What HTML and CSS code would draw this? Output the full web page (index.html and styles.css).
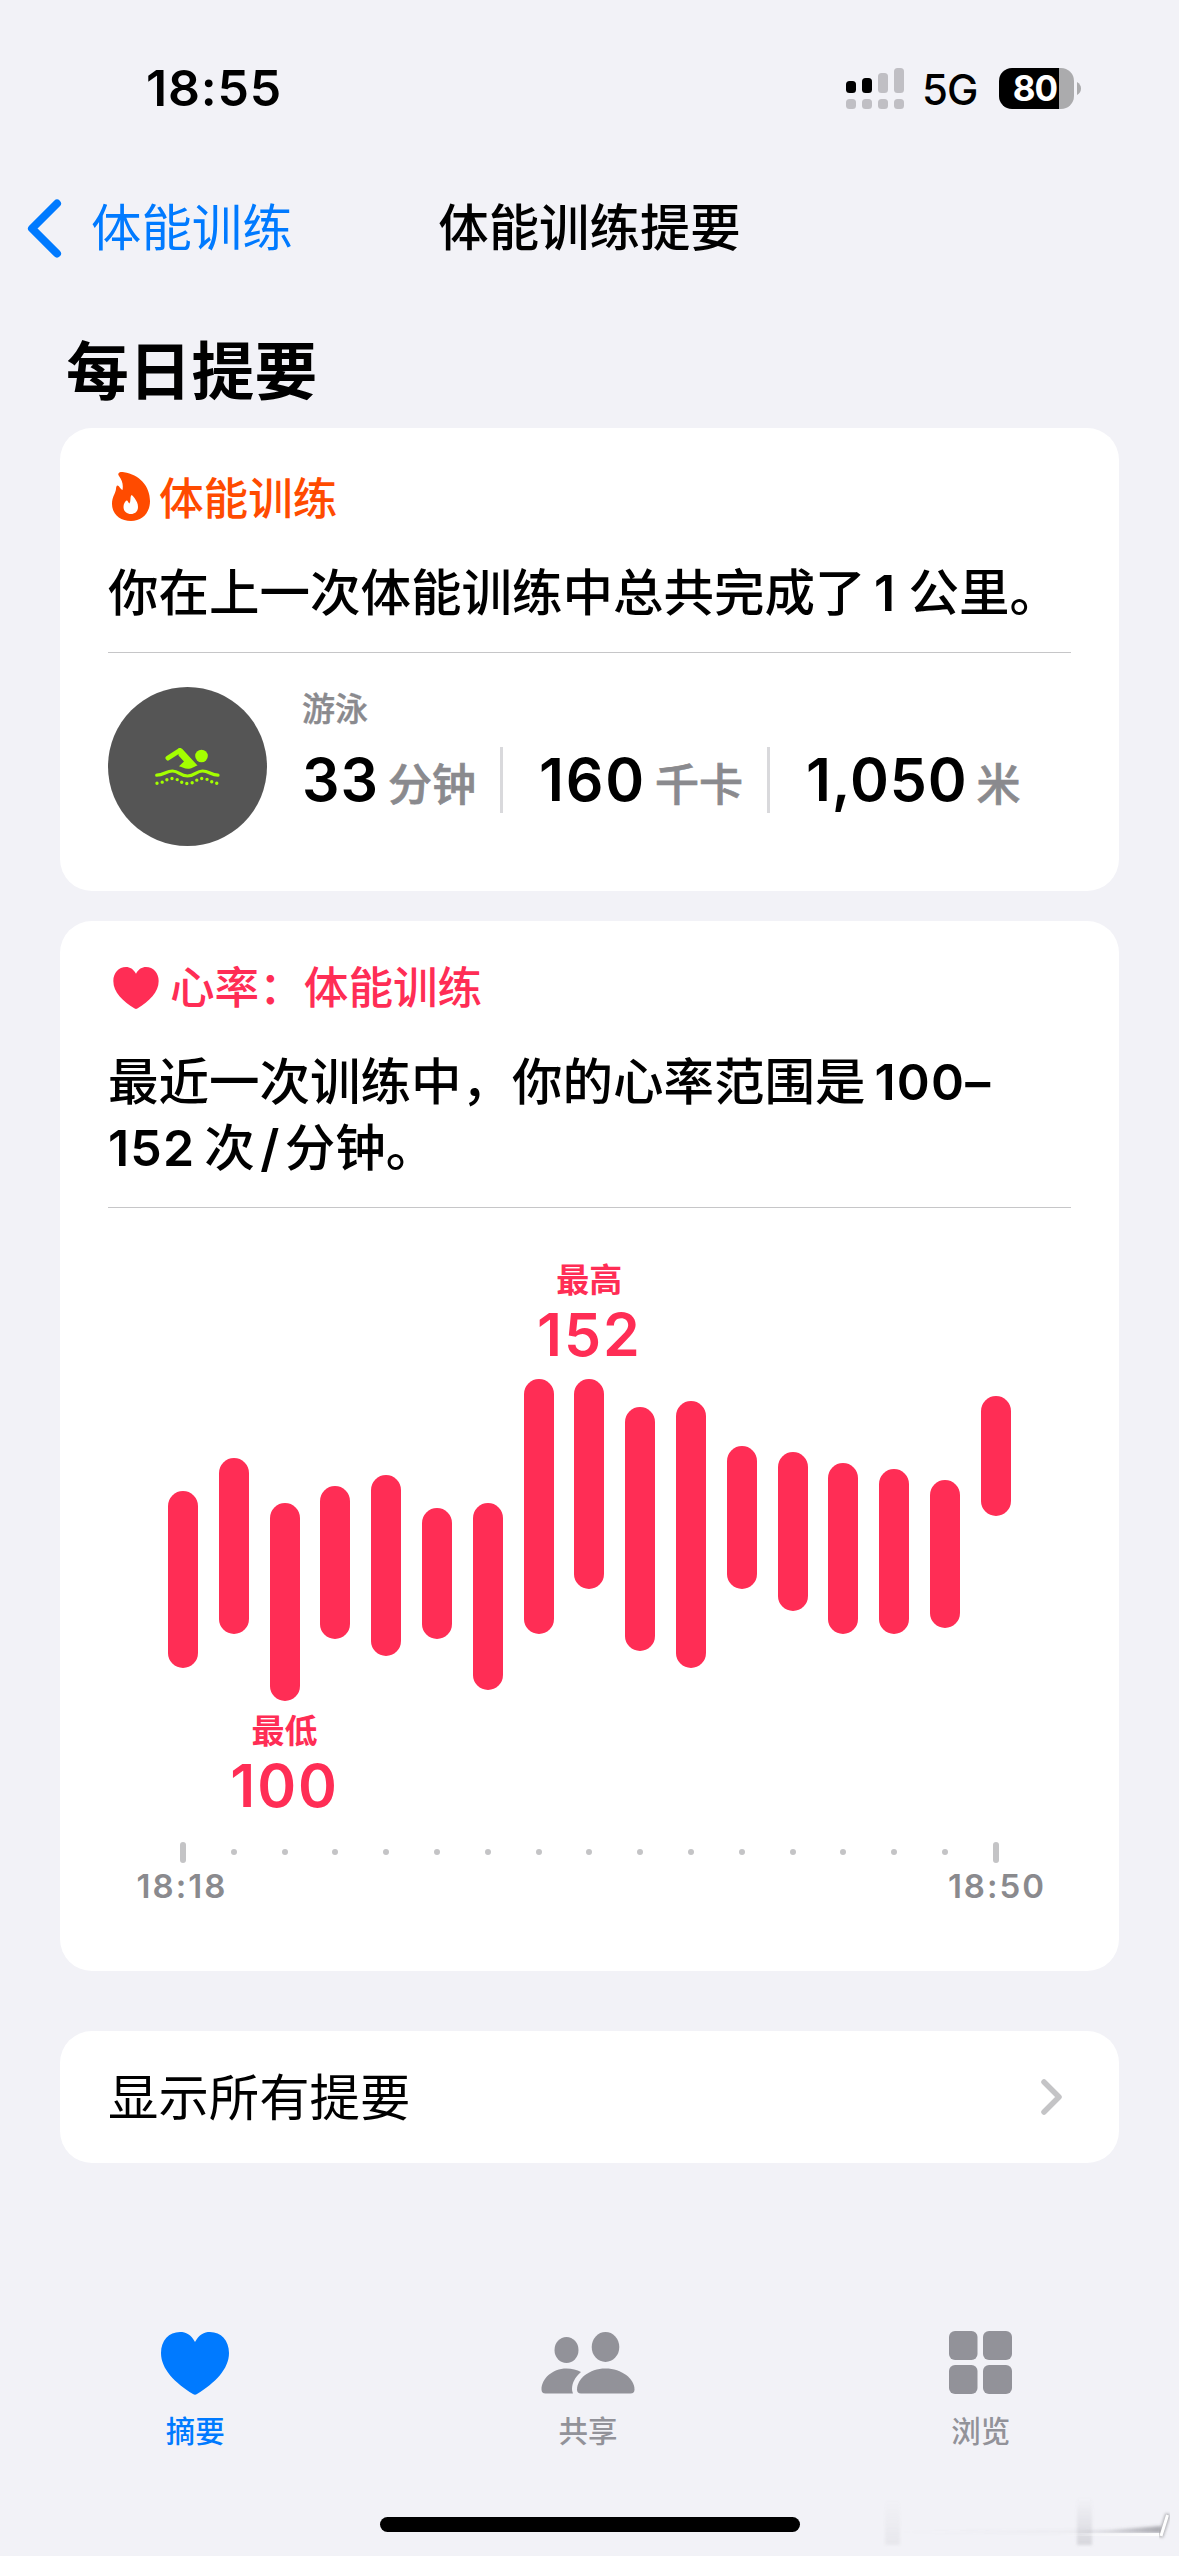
FILE: index.html
```html
<!DOCTYPE html>
<html lang="zh-CN">
<head>
<meta charset="utf-8">
<title>体能训练提要</title>
<link rel="stylesheet" href="styles.css">
</head>
<body>
<div class="screen">
  <header class="status">
    <span class="clock">18:55</span>
    <div class="status-right">
      <svg class="signal" width="58" height="41" viewBox="0 0 58 41">
        <g fill="#000"><rect x="0" y="13" width="10" height="12" rx="3.5"/><rect x="16" y="10" width="10" height="15" rx="3.5"/></g>
        <g fill="#c0bfc4"><rect x="32" y="5" width="10" height="20" rx="3.5"/><rect x="48" y="0" width="10" height="25" rx="3.5"/><rect x="0" y="31" width="10" height="10" rx="3.5"/><rect x="16" y="31" width="10" height="10" rx="3.5"/><rect x="32" y="31" width="10" height="10" rx="3.5"/><rect x="48" y="31" width="10" height="10" rx="3.5"/></g>
      </svg>
      <span class="network">5G</span>
      <div class="battery"><span class="battery-level">80</span></div>
      <svg class="battery-cap" width="4" height="13" viewBox="0 0 4 13"><path d="M0 0Q4 2.5 4 6.5T0 13Z" fill="#ababad"/></svg>
    </div>
  </header>

  <nav class="nav">
    <a class="back">
      <svg width="35" height="59" viewBox="0 0 35 59"><path d="M30 4.500 5 29.500 30 54.500" fill="none" stroke="#007aff" stroke-width="8" stroke-linecap="round" stroke-linejoin="round"/></svg>
      <span>体能训练</span>
    </a>
    <h1 class="nav-title">体能训练提要</h1>
  </nav>

  <main class="content">
    <h2 class="section-title">每日提要</h2>

    <section class="card workout">
      <div class="card-head orange">
        <svg class="flame" width="38" height="49" viewBox="0 0 38 49"><path fill-rule="evenodd" d="M6.500 1.500C7.500-.2 10 0 12 .3 27 2.500 38 14 38 29 38 41 30 49 19 49 8 49 0 42 0 32 0 25 3.500 21.500 4 17 4 15.500 4.500 13.500 5.500 13.500 7 13.500 8 16.500 10.500 18 11.500 12 10 8.500 7 4 6.300 3 6 2.200 6.500 1.500ZM19 23.500C20 22.500 21 24 22.500 26 24.500 29 26 31.500 26 35 26 39.500 23 42 19 42 14.500 42 11.500 39 11.500 35 11.500 32 13 29.500 14.500 28.500 15.800 28 16 30.500 17.500 31.500 19 29 18 26 19 23.500Z" fill="#ff4b00"/></svg>
        <span>体能训练</span>
      </div>
      <p class="summary">你在上一次体能训练中总共完成了<span class="num one">1</span>公里。</p>
      <div class="workout-row">
        <div class="badge">
          <svg width="66" height="40" viewBox="0 0 66 40" fill="none" stroke="#a4ff00" stroke-linecap="round" stroke-linejoin="round">
            <circle cx="46.500" cy="9" r="6.300" fill="#a4ff00" stroke="none"/>
            <path d="M13 11 24 4" stroke-width="5"/>
            <path d="M23.500 1.200C25.500.8 27 1.500 28 2.800L42.500 18.500C38 20 36.500 21.800 33 21.800 29 21.800 27.500 20 24 19.200L29 14.500 23.500 8.500Z" fill="#a4ff00" stroke="none"/>
            <path d="M1.700 28.200C9 28.200 11 24 17.500 24S25 29 32.500 29 41 24 47.500 24 56 28.200 63 28.200" stroke-width="3.200"/>
            <path d="M2 36.300C9 36 11 31.500 17.500 31.500S25 36.500 32.500 36.500 41 31.500 47.500 31.500 56 36 62.500 36.300" stroke-width="3.400" stroke-dasharray="0 5.300"/>
          </svg>
        </div>
        <div class="workout-info">
          <div class="kind">游泳</div>
          <div class="stats">
            <div class="stat"><b>33</b><span>分钟</span></div>
            <div class="stat"><b>160</b><span>千卡</span></div>
            <div class="stat"><b>1,050</b><span>米</span></div>
          </div>
        </div>
      </div>
    </section>

    <section class="card heart">
      <div class="card-head pink">
        <svg class="heart-icon" width="46" height="42" viewBox="0 0 68 63"><path d="M34 10C30 3 25 0 19 0 8 0 0 9 0 21 0 38 14 51 32 62.300Q34 63.500 36 62.300C54 51 68 38 68 21 68 9 60 0 49 0 43 0 38 3 34 10Z" fill="#ff2d55"/></svg>
        <span>心率：体能训练</span>
      </div>
      <p class="summary">最近一次训练中，你的心率范围是<span class="num range">100–</span><br><span class="num low">152</span>次<span class="slash">/</span>分钟。</p>
      <div class="chart">
        <div class="grid marks"><div class="mark max"><span>最高</span><b>152</b></div></div>
        <div class="grid bars">
          <i style="--hi:132;--lo:106"></i><i style="--hi:138;--lo:112"></i><i style="--hi:130;--lo:100"></i><i style="--hi:133;--lo:111"></i><i style="--hi:135;--lo:108"></i><i style="--hi:129;--lo:111"></i><i style="--hi:130;--lo:102"></i><i style="--hi:152;--lo:112"></i><i style="--hi:152;--lo:120"></i><i style="--hi:147;--lo:109"></i><i style="--hi:148;--lo:106"></i><i style="--hi:140;--lo:120"></i><i style="--hi:139;--lo:116"></i><i style="--hi:137;--lo:112"></i><i style="--hi:136;--lo:112"></i><i style="--hi:134;--lo:113"></i><i style="--hi:149;--lo:133"></i>
        </div>
        <div class="grid marks"><div class="mark min"><span>最低</span><b>100</b></div></div>
        <div class="grid ticks"><i></i><i></i><i></i><i></i><i></i><i></i><i></i><i></i><i></i><i></i><i></i><i></i><i></i><i></i><i></i><i></i><i></i></div>
        <div class="times"><span>18:18</span><span>18:50</span></div>
      </div>
    </section>

    <a class="card show-all">
      <span>显示所有提要</span>
      <svg width="24" height="38" viewBox="0 0 24 38"><path d="M4 4 19 19 4 34" fill="none" stroke="#c4c4c6" stroke-width="5.500" stroke-linecap="round" stroke-linejoin="round"/></svg>
    </a>
  </main>

  <footer class="tabs">
    <a class="tab active">
      <svg width="68" height="63" viewBox="0 0 68 63" overflow="visible"><path d="M34 11C30 3.500 25 1 19 1 8 1 0 9.500 0 22 0 38 14 52 32 63Q34 64.500 36 63C54 52 68 38 68 22 68 9.500 60 1 49 1 43 1 38 3.500 34 11Z" fill="#007aff"/></svg>
      <span>摘要</span>
    </a>
    <a class="tab">
      <svg width="94" height="63" viewBox="0 0 94 63" fill="#929299"><ellipse cx="25.500" cy="19" rx="12" ry="13"/><ellipse cx="64.500" cy="16" rx="13.800" ry="15"/><path d="M40 41C34 46 31 52 31 58Q31 60.500 32 62.500H4.500Q.5 62.500.5 58.500C.5 48 11 37.500 25.500 37.500 31 37.500 36 39 40 41Z"/><path d="M40 62.500Q36 62.500 36 58.500C36 48 48 37.500 64.500 37.500S93.500 48 93.500 58.500Q93.500 62.500 89.500 62.500Z"/></svg>
      <span>共享</span>
    </a>
    <a class="tab">
      <svg width="63" height="63" viewBox="0 0 63 63" fill="#929299"><rect width="28.500" height="29" rx="6"/><rect x="34" width="29" height="29" rx="6"/><rect y="34" width="28.500" height="29" rx="6"/><rect x="34" y="34" width="29" height="29" rx="6"/></svg>
      <span>浏览</span>
    </a>
  </footer>
  <div class="home-indicator"></div>
  <svg class="corner-mark" width="320" height="76" viewBox="0 0 320 76">
    <defs>
      <linearGradient id="fade" x1="0" y1="0" x2="0" y2="1"><stop offset="0" stop-color="#808088" stop-opacity="0"/><stop offset="1" stop-color="#808088" stop-opacity=".24"/></linearGradient>
      <linearGradient id="sweep" x1="0" y1="0" x2="1" y2="0"><stop offset="0" stop-color="#707078" stop-opacity="0"/><stop offset=".7" stop-color="#707078" stop-opacity=".07"/><stop offset="1" stop-color="#606068" stop-opacity=".5"/></linearGradient>
      <linearGradient id="shine" x1="0" y1="0" x2="1" y2="0"><stop offset=".6" stop-color="#fff" stop-opacity="0"/><stop offset="1" stop-color="#fff"/></linearGradient>
      <filter id="soft" x="-20%" y="-100%" width="140%" height="300%"><feGaussianBlur stdDeviation="1.500"/></filter>
    </defs>
    <rect x="26" y="18" width="15" height="47" fill="url(#fade)" opacity=".4" filter="url(#soft)"/>
    <rect x="218" y="18" width="15" height="47" fill="url(#fade)" filter="url(#soft)"/>
    <path d="M40 51 250 50 302 46V53H40Z" fill="url(#sweep)" filter="url(#soft)"/>
    <rect x="40" y="53" width="262" height="3" fill="url(#shine)"/>
    <path d="M309 34 301.500 57" stroke="#88888c" stroke-width="5" opacity=".7" filter="url(#soft)"/>
    <path d="M308.500 35 302 56" stroke="#fff" stroke-width="3"/>
  </svg>
</div>
</body>
</html>
```
FILE: styles.css
```css
* { box-sizing: border-box; margin: 0; padding: 0; }

body {
  background: #f2f2f7;
  color: #000;
  font-family: Inter, "Noto Sans CJK SC", sans-serif;
  -webkit-font-smoothing: antialiased;
}

svg { display: block; flex: none; }

.screen {
  position: relative;
  display: flex;
  flex-direction: column;
  width: 1179px;
  height: 2556px;
  overflow: hidden;
}

/* status bar */
.status {
  display: flex;
  align-items: center;
  justify-content: space-between;
  height: 176px;
  padding: 0 98px 0 146px;
}
.clock { font-size: 50px; font-weight: 600; letter-spacing: .8px; }
.status-right { display: flex; align-items: center; }
.network { margin: 2px 0 0 18px; width: 77px; font-size: 42px; font-weight: 500; letter-spacing: -1px; white-space: nowrap; }
.battery {
  display: flex;
  width: 75px;
  height: 41px;
  border-radius: 13px;
  background: linear-gradient(90deg, #000 60px, #ababad 60px);
}
.battery-level {
  width: 72px;
  text-align: center;
  color: #fff;
  font-size: 35px;
  font-weight: 700;
  line-height: 41px;
  letter-spacing: -1px;
}
.battery-cap { margin-left: 3px; }

/* navigation */
.nav {
  display: grid;
  grid-template-columns: 1fr auto 1fr;
  align-items: center;
  height: 103px;
  padding: 1px 27px 0;
}
.back { display: flex; align-items: center; gap: 29px; color: #007aff; font-size: 50.4px; line-height: 70px; }
.nav-title { font-size: 50.4px; font-weight: 500; line-height: 70px; }

.content { display: flex; flex-direction: column; padding: 0 60px; }
.section-title { margin: 52px 0 17px 6px; font-size: 62.8px; font-weight: 700; line-height: 80px; }

/* cards */
.card { width: 1059px; border-radius: 32px; background: #fff; padding: 0 48px; }
.card-head { display: flex; align-items: center; height: 50px; font-size: 44.6px; font-weight: 500; line-height: 50px; }
.orange { color: #ff4b00; }
.pink { color: #ff2d55; }
.flame { margin: -6px 9px 0 4px; }
.heart-icon { margin: 0 11px 0 5px; }
.summary {
  margin-top: 36px;
  padding-bottom: 26px;
  border-bottom: 1px solid #c6c6c8;
  font-size: 50.5px;
  font-weight: 500;
  line-height: 66px;
  white-space: nowrap;
}
.num { font-size: 50px; font-weight: 600; }
.one { display: inline-block; width: 43px; padding-right: 5px; text-align: center; }
.range { padding-left: 9px; letter-spacing: 1.2px; }
.low { padding-right: 9px; letter-spacing: 1.2px; }
.slash { display: inline-block; width: 30px; text-align: center; font-weight: 600; }

.workout { height: 463px; padding-top: 46px; }
.workout-row { display: flex; gap: 35px; padding-top: 34px; }
.badge { display: flex; align-items: center; justify-content: center; width: 159px; height: 159px; border-radius: 50%; background: #555; }
.kind { padding-top: 1px; color: #8a8a8e; font-size: 33px; font-weight: 500; line-height: 42px; -webkit-text-stroke: .4px #8a8a8e; }
.stats { display: grid; grid-template-columns: 198px 267px 280px; grid-template-rows: 66px; height: 66px; margin-top: 17px; }
.stat { display: flex; align-items: baseline; gap: 9px; height: 66px; line-height: 66px; white-space: nowrap; }
.stat + .stat { border-left: 3px solid #d9d9dc; padding-left: 36px; }
.stat b { font-size: 59px; font-weight: 600; letter-spacing: .9px; }
.stat:nth-child(2) b { letter-spacing: 1.8px; }
.stat span { color: #8a8a8e; font-size: 44px; font-weight: 500; -webkit-text-stroke: .7px #8a8a8e; }

/* heart rate range chart */
.heart { height: 1050px; margin-top: 30px; padding-top: 42px; }
.chart { display: flex; flex-direction: column; padding: 52px 49px 0 49.6px; }
.grid { display: grid; grid-template-columns: repeat(17, 50.8px); justify-items: center; }
.mark { display: flex; flex-direction: column; align-items: center; width: 0; color: #ff2d55; white-space: nowrap; }
.mark span { font-size: 33px; font-weight: 700; line-height: 40px; }
.mark b { margin-top: 5px; font-size: 59px; font-weight: 600; line-height: 60px; letter-spacing: 2px; }
.max { grid-column: 9; }
.min { grid-column: 3; padding-top: 1px; }
.bars { height: 331px; margin-top: 14px; }
.bars i {
  width: 30px;
  height: calc((var(--hi) - var(--lo)) * 5.62px + 30px);
  margin-top: calc((152 - var(--hi)) * 5.62px);
  border-radius: 15px;
  background: #ff2d55;
}
.ticks { align-items: center; height: 22px; margin-top: 25px; }
.ticks i { width: 6px; height: 6px; border-radius: 3px; background: #c4c4c6; }
.ticks i:first-child, .ticks i:last-child { height: 21px; }
.times { display: flex; justify-content: space-between; margin: 3px -24px 0 -21px; color: #8a8a8e; font-size: 33px; font-weight: 600; line-height: 40px; letter-spacing: 2px; }

.show-all { display: flex; align-items: center; justify-content: space-between; height: 132px; margin-top: 60px; padding-right: 55px; font-size: 50.4px; line-height: 70px; }
.show-all span { padding-top: 2px; }

/* tab bar */
.tabs { display: grid; grid-template-columns: repeat(3, 1fr); margin: 168px 2px 0 -1px; }
.tab { display: flex; flex-direction: column; align-items: center; gap: 17px; color: #929299; font-size: 29.5px; font-weight: 500; line-height: 40px; }
.active { color: #007aff; }
.home-indicator { align-self: center; width: 420px; height: 15px; margin-top: 66px; border-radius: 8px; background: #000; }
.corner-mark { position: absolute; right: 0; bottom: 0; }
```
